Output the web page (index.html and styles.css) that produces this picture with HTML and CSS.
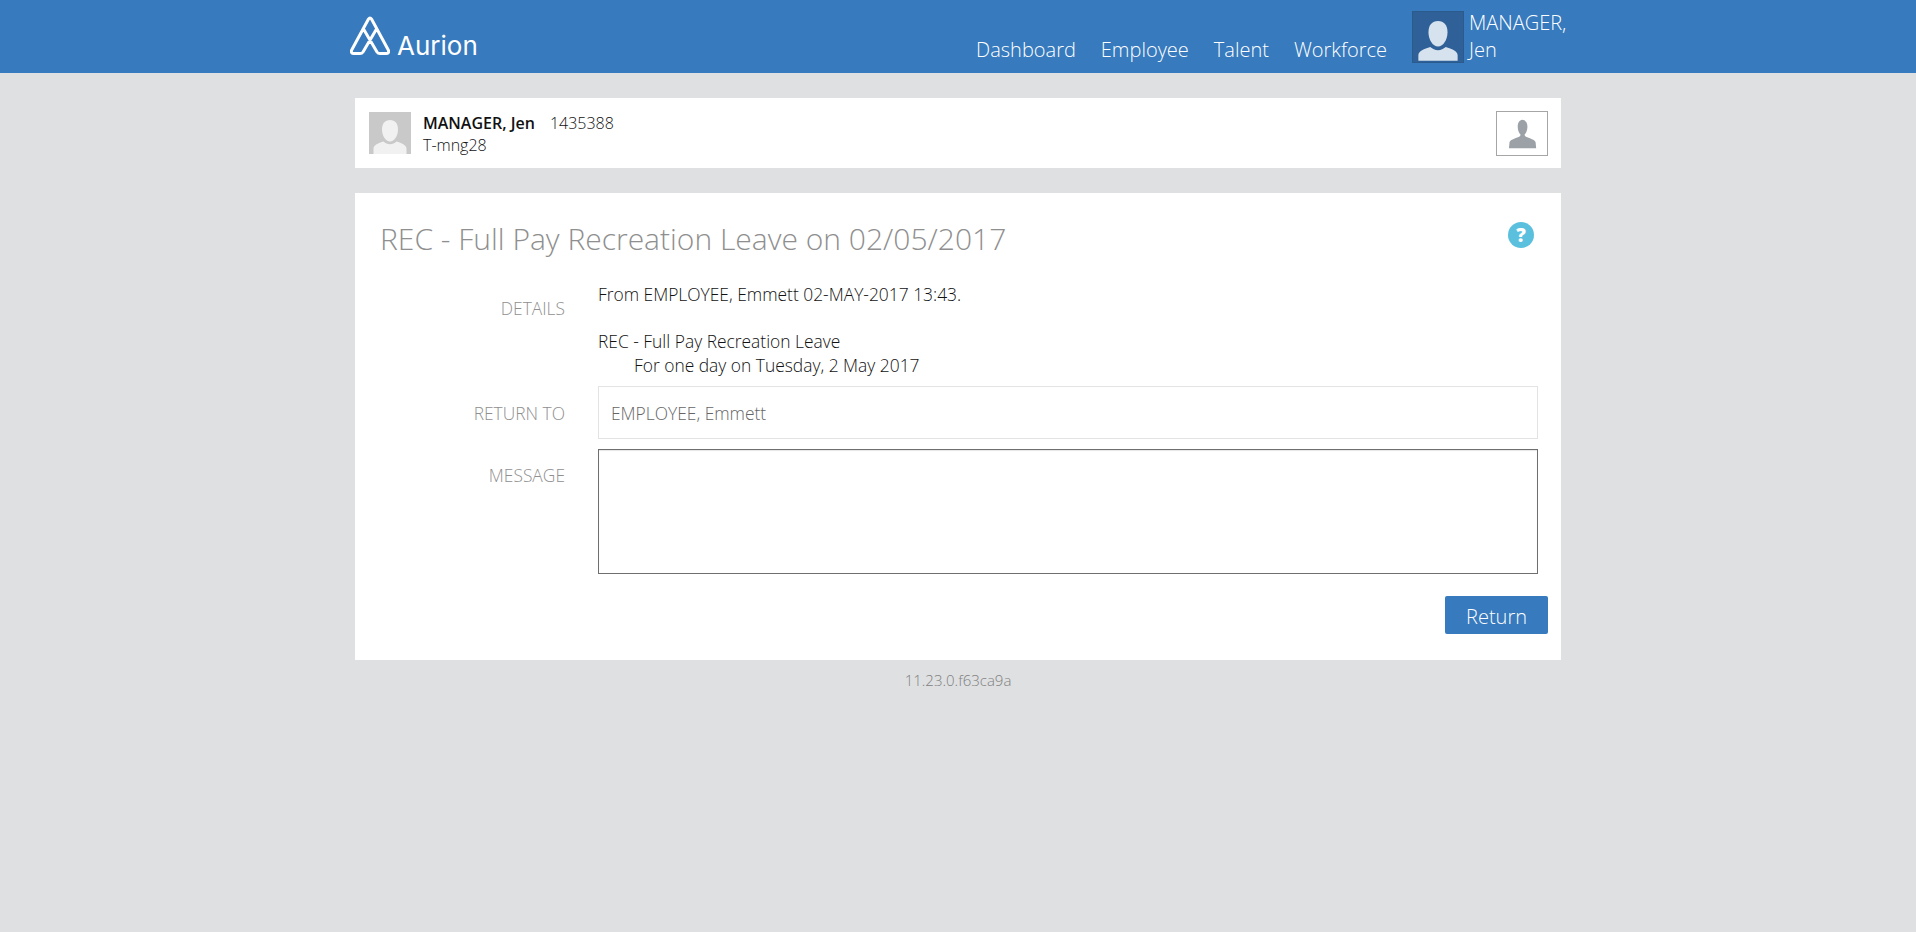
FILE: index.html
```html
<!DOCTYPE html>
<html lang="en">
<head>
<meta charset="utf-8">
<title>Aurion</title>
<link rel="stylesheet" href="styles.css">
</head>
<body>
<header class="topbar">
  <div class="topbar-inner">
    <div class="logo">
      <svg class="logo-mark" viewBox="0 0 40 39" width="40" height="39" fill="none" stroke="#fff" stroke-width="3" stroke-linejoin="round" stroke-linecap="round">
        <path d="M13.500 13 L27 36 Q28 37.500 30 37.500 L36 37.500 Q39.500 37.500 38.300 34 L21.500 3 Q20 .8 18.500 3 L1.700 34 Q.5 37.500 4 37.500 L10 37.500 Q12 37.500 13 36 L26.500 13"/>
      </svg>
      <span class="logo-text">Aurion</span>
    </div>
    <nav class="nav">
      <a class="nav-link">Dashboard</a>
      <a class="nav-link">Employee</a>
      <a class="nav-link">Talent</a>
      <a class="nav-link">Workforce</a>
    </nav>
    <div class="user">
      <svg class="user-pic" viewBox="0 0 42 42" width="52" height="52">
        <rect width="42" height="42" fill="#2f6198"/>
        <path d="M21 7.500c5 0 8 3.500 8 9.500 0 6-3.500 12-8 12s-8-6-8-12c0-6 3-9.500 8-9.500z" fill="#d6e2ee"/>
        <path d="M4.500 41v-4.500c0-3.500 5-5.500 10-7 2 1.700 4 2.700 6.500 2.700s4.500-1 6.500-2.700c5 1.500 10 3.500 10 7V41z" fill="#d6e2ee"/>
      </svg>
      <span class="user-name">MANAGER, Jen</span>
    </div>
  </div>
</header>

<main class="page">
  <section class="profile">
    <svg class="profile-pic" viewBox="0 0 42 42" width="42" height="42">
      <rect width="42" height="42" fill="#c9c9c9"/>
      <path d="M21 8c5 0 8 3.500 8 9.500 0 6-3.500 12-8 12s-8-6-8-12c0-6 3-9.500 8-9.500z" fill="#f1f1f1"/>
      <path d="M4.500 42v-5.500c0-3.500 5-5.500 10-7 2 1.700 4 2.700 6.500 2.700s4.500-1 6.500-2.700c5 1.500 10 3.500 10 7V42z" fill="#f1f1f1"/>
    </svg>
    <div class="profile-text">
      <div><strong class="profile-name">MANAGER, Jen</strong><span class="profile-id">1435388</span></div>
      <div>T-mng28</div>
    </div>
    <button class="profile-btn" type="button" aria-label="Profile">
      <svg viewBox="0 0 30 30" width="34" height="34">
        <path d="M15 2.500c3 0 4.800 2.400 4.800 6 0 3.400-1.500 5.800-2.500 7 0 1.300.8 1.800 2.300 2.400 3.300 1.300 6.900 2.500 7.400 4.300l.5 5.300H3.500l.5-5.300c.5-1.800 4.100-3 7.400-4.300 1.500-.6 2.300-1.100 2.300-2.400-1-1.200-2.500-3.600-2.500-7 0-3.600 1.800-6 4.800-6z" fill="#9ba1a6"/>
      </svg>
    </button>
  </section>

  <section class="card">
    <div class="card-head">
      <h1 class="title">REC - Full Pay Recreation Leave on 02/05/2017</h1>
      <svg class="help" viewBox="0 0 26 26" width="26" height="26">
        <circle cx="13" cy="13" r="13" fill="#5bc0de"/>
        <text x="13" y="19.500" text-anchor="middle" class="help-mark">?</text>
      </svg>
    </div>
    <div class="row row-details">
      <div class="label label-details">DETAILS</div>
      <div class="details">
        <p class="details-from">From EMPLOYEE, Emmett 02-MAY-2017 13:43.</p>
        <p class="details-line">REC - Full Pay Recreation Leave</p>
        <p class="details-line details-indent">For one day on Tuesday, 2 May 2017</p>
      </div>
    </div>
    <div class="row row-return">
      <div class="label label-return">RETURN TO</div>
      <div class="field">EMPLOYEE, Emmett</div>
    </div>
    <div class="row row-message">
      <div class="label label-message">MESSAGE</div>
      <div class="textarea"></div>
    </div>
    <div class="actions">
      <button class="return-btn" type="button">Return</button>
    </div>
  </section>

  <footer class="version">11.23.0.f63ca9a</footer>
</main>
</body>
</html>
```
FILE: styles.css
```css
* { box-sizing: border-box; }
html, body { margin: 0; padding: 0; }
body {
  background: #dfe0e2;
  font-family: "Open Sans", "Liberation Sans", sans-serif;
  font-weight: 300;
  font-size: 16px;
  color: #111;
  min-height: 932px;
}
.topbar { background: #377abd; height: 73px; }
.topbar-inner {
  width: 1220px;
  height: 73px;
  margin-left: 349px;
  display: flex;
  align-items: flex-start;
  color: #fff;
}
.logo { display: flex; align-items: flex-start; }
.logo-mark { display: block; margin: 16px 0 0 1px; }
.logo-text {
  font-family: Inter, "Open Sans", sans-serif;
  font-weight: 400;
  font-size: 26px;
  line-height: 30px;
  margin: 31px 0 0 7px;
  color: #fff;
}
.nav {
  display: flex;
  gap: 25px;
  margin-left: auto;
  padding-top: 36px;
  font-size: 20px;
  line-height: 27px;
}
.nav-link { color: #fff; }
.user { display: flex; margin-left: 25px; padding-top: 11px; }
.user-pic { display: block; flex: none; border: 1px solid #2b5a8c; }
.user-name {
  width: 100px;
  margin-left: 5px;
  font-size: 20px;
  line-height: 27px;
  margin-top: -2px;
}
.page { width: 1206px; margin-left: 355px; padding-top: 25px; }
.profile {
  background: #fff;
  height: 70px;
  display: flex;
  align-items: flex-start;
  padding: 14px 13px 0 14px;
}
.profile-pic { display: block; flex: none; }
.profile-text { margin-left: 12px; line-height: 22px; font-size: 16px; color: #111; }
.profile-name { font-weight: 600; }
.profile-id { margin-left: 15px; }
.profile-btn {
  margin-left: auto;
  margin-top: -1px;
  width: 52px;
  height: 45px;
  padding: 0;
  background: #fff;
  border: 1px solid #a6a6a6;
  display: flex;
  align-items: center;
  justify-content: center;
}
.card {
  background: #fff;
  height: 467px;
  margin-top: 25px;
  padding: 0 13px 0 25px;
}
.card-head {
  display: flex;
  align-items: flex-start;
  justify-content: space-between;
  padding-top: 25px;
  height: 88px;
}
.title {
  margin: 0;
  font-weight: 300;
  font-size: 30px;
  line-height: 41px;
  color: #8f8f8f;
}
.help { display: block; margin: 4px 14px 0 0; }
.help-mark {
  font-family: "Open Sans", sans-serif;
  font-weight: 800;
  font-size: 19px;
  fill: #fff;
}
.row { display: flex; }
.label {
  width: 185px;
  flex: none;
  text-align: right;
  color: #8f8f8f;
  font-size: 17.4px;
  line-height: 53px;
}
.row-details { height: 105px; }
.label-details { line-height: 24px; padding-top: 15px; }
.details { margin-left: 33px; padding-top: 1px; color: #111; font-size: 17.4px; line-height: 24px; }
.details .details-from { margin: 0 0 23px; }
.details .details-line { margin: 0; }
.details .details-indent { padding-left: 36px; }
.row-return { height: 53px; }
.label-return { padding-top: 1px; }
.field {
  margin-left: 33px;
  width: 940px;
  height: 53px;
  border: 1px solid #e3e3e3;
  padding: 1px 12px 0;
  font-size: 17.4px;
  line-height: 51px;
  color: #666;
}
.row-message { margin-top: 10px; }
.label-message { line-height: 24px; padding-top: 14px; }
.textarea {
  margin-left: 33px;
  width: 940px;
  height: 125px;
  border: 1px solid #6f6f6f;
  box-shadow: inset 0 1px 1px rgba(0,0,0,.1);
}
.actions { display: flex; justify-content: flex-end; margin-top: 22px; }
.return-btn {
  width: 103px;
  height: 38px;
  padding: 4px 0 0;
  border: 0;
  border-radius: 2px;
  background: #377abd;
  color: #fff;
  font-family: "Open Sans", sans-serif;
  font-weight: 300;
  font-size: 20px;
  line-height: 34px;
}
.version {
  text-align: center;
  font-size: 15px;
  line-height: 20px;
  margin-top: 10px;
  color: #808080;
}
```
